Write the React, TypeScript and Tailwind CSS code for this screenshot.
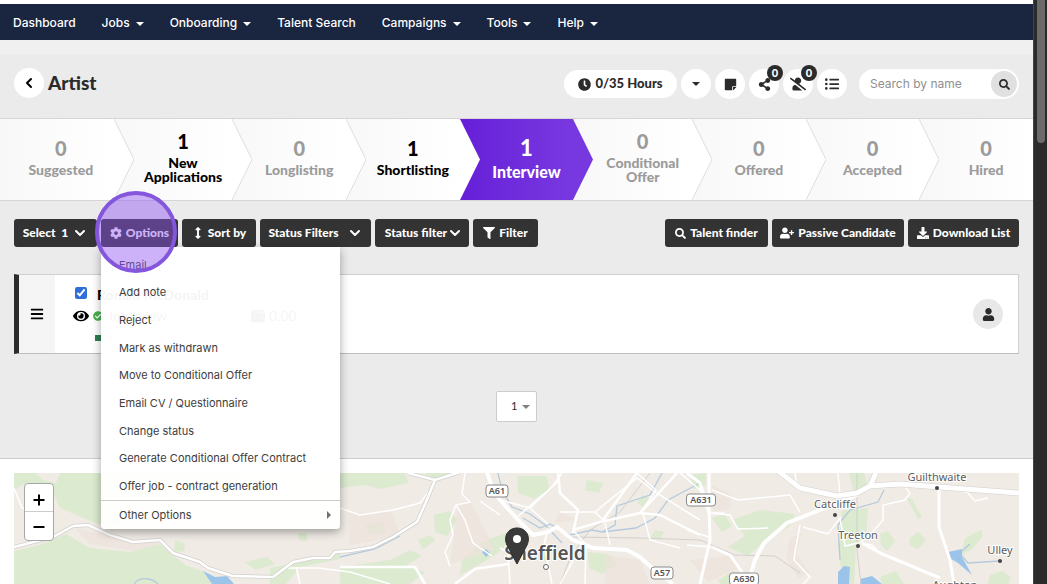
import type { ReactNode } from 'react';
import {
  FaArrowsAltV,
  FaBars,
  FaCheckCircle,
  FaClock,
  FaCog,
  FaDownload,
  FaEye,
  FaFilter,
  FaListUl,
  FaSearch,
  FaShareAlt,
  FaStickyNote,
  FaUser,
  FaUserPlus,
  FaUserSlash,
  FaWallet,
} from 'react-icons/fa';
import { FiChevronDown, FiChevronLeft } from 'react-icons/fi';

const navItems = [
  { label: 'Dashboard', menu: false },
  { label: 'Jobs', menu: true },
  { label: 'Onboarding', menu: true },
  { label: 'Talent Search', menu: false },
  { label: 'Campaigns', menu: true },
  { label: 'Tools', menu: true },
  { label: 'Help', menu: true },
];

const stages = [
  { name: 'Suggested', count: 0 },
  { name: 'New Applications', count: 1, wide: true },
  { name: 'Longlisting', count: 0 },
  { name: 'Shortlisting', count: 1 },
  { name: 'Interview', count: 1, active: true },
  { name: 'Conditional Offer', count: 0, wide: true },
  { name: 'Offered', count: 0 },
  { name: 'Accepted', count: 0 },
  { name: 'Hired', count: 0 },
];

const menuItems = [
  'Email',
  'Add note',
  'Reject',
  'Mark as withdrawn',
  'Move to Conditional Offer',
  'Email CV / Questionnaire',
  'Change status',
  'Generate Conditional Offer Contract',
  'Offer job - contract generation',
];

function Caret({ className = '' }: { className?: string }) {
  return (
    <svg viewBox="0 0 8 4" className={`h-1 w-2 ${className}`} fill="currentColor" aria-hidden="true">
      <path d="M0 0 H8 L4 4 Z" />
    </svg>
  );
}

function NavBar() {
  return (
    <nav className="mt-1 flex h-9 shrink-0 items-center gap-[26px] bg-[#1a2540] px-[13px] pt-0.5 font-['Inter','Liberation_Sans',sans-serif] text-xs font-medium text-white">
      {navItems.map((item) => (
        <a key={item.label} href="#" className="flex items-center gap-1.5 whitespace-nowrap">
          {item.label}
          {item.menu && <Caret className="mt-0.5" />}
        </a>
      ))}
    </nav>
  );
}

function RoundButton({ label, badge, children }: { label: string; badge?: number; children: ReactNode }) {
  return (
    <button
      aria-label={label}
      className="relative flex h-[30px] w-[30px] items-center justify-center rounded-full bg-white text-sm text-[#2b2b2b]"
    >
      {children}
      {badge !== undefined && (
        <span className="absolute -top-1 -right-1 flex h-4 w-4 items-center justify-center rounded-full bg-[#2b2b2b] text-[11px] font-black text-white">
          {badge}
        </span>
      )}
    </button>
  );
}

function PageHeader() {
  return (
    <header className="flex h-16 items-center justify-between px-3.5">
      <div className="flex items-center gap-1 pb-1.5">
        <button aria-label="Back" className="flex h-[30px] w-[30px] items-center justify-center rounded-full bg-white">
          <FiChevronLeft className="h-4 w-4 stroke-3" />
        </button>
        <h1 className="text-[19px] leading-6 font-black text-[#2b2b2b]">Artist</h1>
      </div>
      <div className="flex items-center gap-1 pb-1">
        <button className="flex h-7 w-[113px] items-center justify-center gap-1 rounded-full bg-white text-[13px] font-black text-[#2b2b2b]">
          <FaClock className="h-[13px] w-[13px]" />
          0/35 Hours
        </button>
        <RoundButton label="More hours">
          <Caret />
        </RoundButton>
        <RoundButton label="Notes">
          <FaStickyNote className="h-[13px] w-[13px]" />
        </RoundButton>
        <RoundButton label="Shared" badge={0}>
          <FaShareAlt className="h-[13px] w-[13px]" />
        </RoundButton>
        <RoundButton label="Hidden candidates" badge={0}>
          <FaUserSlash className="h-3.5 w-4" />
        </RoundButton>
        <RoundButton label="List view">
          <FaListUl className="h-3.5 w-3.5" />
        </RoundButton>
        <form className="ml-2 flex h-[30px] w-[160px] items-center rounded-full bg-white pr-0.5 pl-[11px]">
          <input
            type="text"
            aria-label="Search by name"
            placeholder="Search by name"
            className="min-w-0 flex-1 font-['Inter','Liberation_Sans',sans-serif] text-xs outline-none placeholder:text-[#8f8f8f]"
          />
          <button
            type="button"
            aria-label="Search"
            className="flex h-[26px] w-[26px] items-center justify-center rounded-full bg-[#e0e0e0] text-[#2b2b2b]"
          >
            <FaSearch className="h-[11px] w-[11px]" />
          </button>
        </form>
      </div>
    </header>
  );
}

function Pipeline() {
  return (
    <div className="flex h-[83px] border-y border-[#d6d6d6] bg-white">
      {stages.map((stage, i) => {
        const afterActive = i > 0 && stages[i - 1].active;
        let tone = 'bg-linear-to-r from-[#f8f8f8] to-white text-[#9b9b9b]';
        if (stage.active) tone = 'bg-linear-to-r from-[#661ed8] to-[#7838e0] text-white';
        else if (stage.count > 0) tone = 'bg-linear-to-r from-[#f8f8f8] to-white text-black';
        return (
          <a
            key={stage.name}
            href="#"
            className={`relative flex shrink grow flex-col items-center justify-center text-center font-black ${tone} ${
              stage.wide ? 'basis-[11.5%] pb-1.5' : 'basis-[11%]'
            } ${!stage.wide && !stage.active ? 'pb-1' : ''} ${i > 0 ? 'pl-5' : 'pl-2'}`}
          >
            {i > 0 && (
              <svg
                viewBox="0 0 20 81"
                preserveAspectRatio="none"
                className="absolute top-0 left-0 h-full w-5"
                aria-hidden="true"
              >
                <path d="M0 0 L20 40.5 L0 81 Z" fill={afterActive ? '#7838e0' : '#ffffff'} />
                {!afterActive && !stage.active && (
                  <path d="M0 0 L20 40.5 L0 81" fill="none" stroke="#dedede" strokeWidth="1" />
                )}
              </svg>
            )}
            <span className={stage.active ? 'text-[22px] leading-6' : 'text-xl leading-6'}>{stage.count}</span>
            <span
              className={
                stage.active ? 'text-base leading-6' : `text-sm ${stage.wide ? 'mt-[3px] leading-[14px]' : 'leading-5'}`
              }
            >
              {stage.name}
            </span>
          </a>
        );
      })}
    </div>
  );
}

function ToolButton({ width, children }: { width: string; children: ReactNode }) {
  return (
    <button
      className={`flex h-7 items-center justify-center gap-1 rounded-[3px] bg-[#333333] text-xs font-black whitespace-nowrap text-white ${width}`}
    >
      {children}
    </button>
  );
}

function OptionsMenu() {
  return (
    <div className="absolute top-full left-0 z-10 w-[239px] rounded-b-sm bg-white/[0.96] font-['Inter','Liberation_Sans',sans-serif] text-[11px] text-[#3d3d3d] shadow-[0_3px_10px_rgba(0,0,0,0.35)]">
      <ul className="flex h-[253px] flex-col pt-1">
        {menuItems.map((item) => (
          <li key={item} className="flex-1">
            <a href="#" className="flex h-full items-center px-[18px]">
              {item}
            </a>
          </li>
        ))}
      </ul>
      <a href="#" className="flex h-[29px] items-center justify-between border-t border-[#cccccc] pr-[7px] pl-[18px]">
        Other Options
        <Caret className="-rotate-90 text-[#707070]" />
      </a>
    </div>
  );
}

function Toolbar() {
  return (
    <div className="flex justify-between px-3.5 pt-[18px]">
      <div className="flex gap-1">
        <ToolButton width="w-[83px]">
          <span>Select&nbsp; 1</span>
          <FiChevronDown className="h-4 w-4 stroke-3" />
        </ToolButton>
        <div className="relative">
          <ToolButton width="w-[77px]">
            <FaCog className="h-3 w-3" />
            Options
          </ToolButton>
          <OptionsMenu />
          {/* click highlight */}
          <div className="pointer-events-none absolute -top-7 -left-1.5 z-20 h-[82px] w-[82px] rounded-full border-4 border-[#8456dc] bg-[#9155f5]/45" />
        </div>
        <ToolButton width="w-[74px]">
          <FaArrowsAltV className="h-3 w-3" />
          Sort by
        </ToolButton>
        <ToolButton width="w-[111px]">
          <span className="mr-1">Status Filters</span>
          <FiChevronDown className="h-4 w-4 stroke-3" />
        </ToolButton>
        <ToolButton width="w-[94px]">
          <span>Status filter</span>
          <FiChevronDown className="-mx-1 h-4 w-4 stroke-3" />
        </ToolButton>
        <ToolButton width="w-[65px]">
          <FaFilter className="h-3 w-3" />
          Filter
        </ToolButton>
      </div>
      <div className="flex gap-1">
        <ToolButton width="w-[103px]">
          <FaSearch className="h-[11px] w-[11px]" />
          Talent finder
        </ToolButton>
        <ToolButton width="w-[132px]">
          <FaUserPlus className="h-3 w-3.5" />
          Passive Candidate
        </ToolButton>
        <ToolButton width="w-[111px]">
          <FaDownload className="h-3 w-3" />
          Download List
        </ToolButton>
      </div>
    </div>
  );
}

function CandidateCard() {
  return (
    <div className="mx-3.5 mt-[27px] flex h-20 border-y border-r border-l-[5px] border-[#cfcfcf] border-b-[#bdbdbd] border-l-[#2b2b2b] bg-white">
      <div className="flex w-9 items-center justify-center bg-[#f5f5f5]">
        <FaBars className="h-3.5 w-3.5" />
      </div>
      <div className="flex-1 pt-2.5 pl-[18px]">
        <div className="flex h-5 items-center gap-2.5">
          <input
            type="checkbox"
            defaultChecked
            aria-label="Select Ronald McDonald"
            className="mb-1 ml-0.5 h-3 w-3 accent-[#2f6fdb]"
          />
          <h2 className="text-sm font-black text-black">Ronald McDonald</h2>
        </div>
        <div className="flex h-[22px] items-center text-sm">
          <FaEye className="h-4 w-4" />
          <FaCheckCircle className="ml-1 h-2.5 w-2.5 text-[#4caf50]" />
          <span className="ml-1.5 w-[142px]">Interview</span>
          <FaWallet className="mr-1 h-3.5 w-3.5" />
          0.00
        </div>
        <div className="mt-2 flex gap-1.5 pl-[22px]">
          <span className="h-1.5 w-1.5 bg-[#2e7d4f]" />
          <span className="h-1.5 w-1.5 bg-[#cccccc]" />
        </div>
      </div>
      <div className="flex items-center pr-[15px]">
        <button
          aria-label="Candidate profile"
          className="flex h-[30px] w-[30px] items-center justify-center rounded-full bg-[#e8e8e8] text-[#2b2b2b]"
        >
          <FaUser className="h-[13px] w-[13px]" />
        </button>
      </div>
    </div>
  );
}

function RoadSign({ x, y, label }: { x: number; y: number; label: string }) {
  const w = label.length * 7 + 1;
  return (
    <g>
      <rect x={x - w / 2} y={y - 6} width={w} height="12" rx="3" fill="#fff" stroke="#8a8a8a" />
      <text x={x} y={y + 3} fontSize="9" fontWeight="600" textAnchor="middle" fill="#555">
        {label}
      </text>
    </g>
  );
}

function Place({ x, y, label }: { x: number; y: number; label: string }) {
  return (
    <g>
      <circle cx={x} cy={y} r="2" fill="#444" />
      <text x={x} y={y - 7} fontSize="11" textAnchor="middle" fill="#5c5c5c" stroke="#fff" strokeWidth="2" paintOrder="stroke">
        {label}
      </text>
    </g>
  );
}

const mainRoad =
  'M14 547 L53 537 L73 526 L88 525 L110 535 L133 542 L160 540 L173 553 L200 562 L208 568 L233 576 L273 577 L293 562 L313 558 L330 558 L335 552 L350 551 L373 547 L393 537 L417 522 L426 502 L435 480 L460 472 M435 480 L408 473';
const motorway = 'M777 470 L800 488 L837 496 L857 493 L870 486 L900 484 L1019 493 M870 486 L876 473';

function AreaMap() {
  return (
    <div className="relative mx-3.5 mt-3.5 h-[111px] overflow-hidden bg-[#f0ebe5]">
      <svg
        viewBox="14 473 1005 111"
        preserveAspectRatio="xMidYMin slice"
        className="h-full w-full font-['Noto_Sans','Open_Sans',sans-serif]"
        role="img"
        aria-label="Map of Sheffield"
      >
        {/* woodland and parks */}
        <g fill="#dcead0">
          <path d="M14 473 H36 L43 480 L56 483 L60 473 H150 L240 473 L235 485 L180 500 L110 528 L88 520 L60 508 L53 492 L24 484 L14 490Z" />
          <path d="M14 551 L40 545 L66 534 L90 548 L130 552 L160 544 L185 565 L205 572 L212 584 H14Z" />
          <path d="M175 540 l10 3 -1 9 -10 -1z M298 533 l9 0 0 8 -8 -1z M245 562 l22 -5 8 7 -20 6z M270 568 L340 553 V559 L300 567 L286 584 H270Z" />
          <path d="M340 473 H405 L408 483 L380 489 L365 485 L340 488Z M425 473 h30 l-20 10z" />
          <path d="M434 515 l15 -4 8 8 -10 17 -12 -4z M418 540 l12 -5 5 6 -12 8z M365 525 l18 -4 2 12 -15 2z" />
          <path d="M340 567 L390 560 L410 550 L422 556 L405 566 L425 572 L410 584 H340Z" />
          <path d="M462 560 L480 543 L508 532 L512 538 L498 553 L475 567 L460 575Z" />
          <path d="M517 476 h30 l2 14 -15 9 -16 -6z M587 480 l16 3 -4 10 -14 -3z M588 552 l20 2 10 10 -16 10 -13 -6z" />
          <path d="M543 547 l7 6 -4 8 -8 -3z M655 530 l9 2 -4 8 -9 -3z M643 495 l10 5 -8 8 -8 -5z" />
          <path d="M732 520 L760 510 L795 514 L790 526 L766 540 L748 556 L728 547 L745 536Z" />
          <path d="M712 518 l12 -4 8 12 -10 6z M690 475 l16 -2 0 12 -12 4z M718 580 l15 -9 13 13 h-26z" />
          <path d="M849 473 l15 0 4 14 -14 6z M842 511 L868 508 L866 536 L856 545 L854 584 H843 L838 545Z" />
          <path d="M906 497 l6 2 10 18 -4 2z M880 534 l8 -3 7 10 -8 10 -6 -6z M910 538 l8 -6 8 8 -8 9 -9 -4z M965 538 l16 -8 2 6 -12 14 -10 6z" />
          <path d="M880 577 l16 -6 8 13 h-22z M990 575 l12 -4 9 6 -3 7 h-20z" />
        </g>
        {/* built-up areas */}
        <g fill="#ece2dc" opacity="0.7">
          <path d="M75 528 L130 540 L162 543 L137 551 L90 544Z M348 513 L392 512 L400 536 L350 545Z M458 504 L470 500 L495 550 L450 564Z" />
          <path d="M605 555 l35 5 10 24 h-45z M690 560 l40 -4 8 12 -30 14z M790 538 l12 -5 -6 20 14 20 -12 5 -12 -20z M560 510 l15 10 -20 3z M712 485 l20 10 -3 15 -16 0z" />
        </g>
        {/* water */}
        <g fill="#9cc4ea">
          <path d="M203 571 l12 6 12 -1 7 8 h-22z M838 572 l6 -6 6 1 -1 17 h-11z M860 579 l12 -3 10 8 h-22z M948 552 l14 -3 0 8 10 18 -14 -12 -10 -6z M482 552 l4 -3 4 4 -4 4z" />
        </g>
        <g fill="none" stroke="#b5cbdd" strokeWidth="1.3">
          <path d="M134 584 C140 576 152 578 158 584 M340 557 L375 549 L400 536 M498 473 L502 490 L512 507 L530 514 L545 525 L562 543" />
          <path d="M523 518 L540 528 L550 524 L570 535 L592 530 L602 532 L615 525 L617 506 L650 495 L662 473 M602 532 L636 528 L655 518 L668 500 L700 483" />
          <path d="M884 490 L878 502 L850 510 L838 525 L840 560 M962 551 L970 544 M962 556 L968 563 L1000 561" />
        </g>
        <g fill="none" stroke="#d3d0cd" strokeWidth="1">
          <path d="M571 537 L640 538 L700 540 L735 555 L775 556 L800 573 M560 584 L571 556 L590 530 L620 512 L650 473 M857 473 L857 550 L861 584" />
        </g>
        {/* minor roads */}
        <g fill="none" stroke="#ffffff" strokeWidth="1.5">
          <path d="M14 488 L22 508 L36 513 M340 508 L360 515 L393 510 L420 503 L434 485 M288 568 L318 568 L350 572 L390 584 M296 567 L300 584" />
          <path d="M465 473 L462 494 L470 502 L456 505 L450 520 L453 535 L445 552 L450 566 M456 505 L465 520 L473 543 L492 556 M480 501 L500 515" />
          <path d="M500 500 L530 508 L552 487 L562 473 M530 508 L548 524 M516 518 L560 480 M560 512 L595 512 L603 520 M595 512 L637 478 L655 492 L687 512 L700 520" />
          <path d="M573 530 L586 545 L585 584 M560 584 L580 548 M548 528 L544 545 L552 584 M510 584 L508 552 L500 548 M605 523 L610 545 M643 514 L650 540 L680 548 M637 473 L656 490 L640 513 M680 473 L700 490 L709 515" />
          <path d="M709 513 L730 515 L738 529 L768 528 M687 530 L709 537 M687 545 L712 547 M709 513 L724 513 M712 490 L738 500 L790 495 L800 512" />
          <path d="M800 525 L795 552 L794 560 L810 577 L803 584 M803 527 L828 534 L840 518 L845 546 L858 543 M838 473 L840 495 M795 473 L797 487" />
          <path d="M859 543 L870 535 L883 520 L883 505 L905 500 L910 493 L905 487 M862 543 L872 545 L883 556 M945 488 L967 492 L975 501 L988 498" />
        </g>
        {/* primary roads */}
        <g fill="none" strokeLinejoin="round">
          <path d={mainRoad} stroke="#d2d0ce" strokeWidth="4" />
          <path d={mainRoad} stroke="#fff" strokeWidth="2.5" />
          <path d="M487 472 L493 490 L500 500 L520 522 L533 535 L548 532 L557 527 L573 540 L593 548 L627 550 L640 557 L652 568 L673 584" stroke="#fff" strokeWidth="4" />
          <path d="M573 530 L600 522 L640 513 L655 497 L677 473 M637 473 L603 520 M573 533 L578 510 L560 493 L558 473 M340 567 L415 567 L425 584 M455 584 L475 569 L508 564 M640 513 L660 515 L700 535" stroke="#fff" strokeWidth="2.5" />
          <path d="M687 473 L700 483 L709 510 M709 473 L709 507 L710 540 L700 584 M712 547 L730 555 L742 572 M939 488 L939 527 L950 560 L954 584 M862 543 L880 553 L904 563 L940 578" stroke="#fff" strokeWidth="3" />
          <path d="M857 495 L820 510 L787 523 L764 543 L755 560 L748 584" stroke="#fff" strokeWidth="4" />
          <path d={motorway} stroke="#d2d0ce" strokeWidth="6" />
          <path d={motorway} stroke="#fff" strokeWidth="5" />
        </g>
        <RoadSign x={497} y={491} label="A61" />
        <RoadSign x={701} y={500} label="A631" />
        <RoadSign x={662} y={573} label="A57" />
        <RoadSign x={744} y={579} label="A630" />
        <Place x={937} y={488} label="Guilthwaite" />
        <Place x={835} y={515} label="Catcliffe" />
        <Place x={858} y={546} label="Treeton" />
        <Place x={1000} y={561} label="Ulley" />
        <Place x={955} y={596} label="Aughton" />
        <circle cx="546" cy="567" r="2.5" fill="#fff" stroke="#666" />
        <text x="545" y="560" fontSize="19" fontWeight="600" textAnchor="middle" fill="#555" stroke="#fff" strokeWidth="2" paintOrder="stroke">
          Sheffield
        </text>
        <path d="M517 564 L508 547 C502 537 508 528 517 528 C526 528 532 537 526 547Z" fill="#3a3a3a" stroke="#2b2b2b" />
        <circle cx="517" cy="539" r="4" fill="#fff" />
      </svg>
      <div className="absolute top-2.5 left-2.5 flex w-[30px] flex-col overflow-hidden rounded-sm border border-[#a8a8a8] bg-white text-black">
        <button aria-label="Zoom in" className="flex h-7 items-center justify-center border-b border-[#cccccc] pt-1">
          <svg viewBox="0 0 12 12" className="h-3 w-3" stroke="currentColor" strokeWidth="2">
            <path d="M6 0.5 V11.5 M0.5 6 H11.5" />
          </svg>
        </button>
        <button aria-label="Zoom out" className="flex h-7 items-center justify-center pt-0.5">
          <svg viewBox="0 0 12 12" className="h-3 w-3" stroke="currentColor" strokeWidth="2">
            <path d="M0.5 6 H11.5" />
          </svg>
        </button>
      </div>
    </div>
  );
}

export default function App() {
  return (
    <div className="flex h-screen overflow-hidden bg-white font-['Lato','Liberation_Sans',sans-serif]">
      <div className="flex min-w-0 flex-1 flex-col overflow-hidden">
        <NavBar />
        <main className="shrink-0">
          <div className="border-b border-[#cccccc] bg-[#ebebeb] pb-9">
            <div className="h-3.5 bg-[#f0f0f0]" />
            <PageHeader />
            <Pipeline />
            <Toolbar />
            <CandidateCard />
            <div className="flex justify-center pt-[37px]">
              <div className="relative">
                <select
                  aria-label="Page"
                  className="h-[31px] w-[41px] appearance-none rounded-xs border border-[#cccccc] bg-white pl-3.5 text-[11px] text-[#2b2b2b]"
                >
                  <option>1</option>
                </select>
                <Caret className="pointer-events-none absolute top-3.5 right-[7px] text-[#808080]" />
              </div>
            </div>
          </div>
          <AreaMap />
        </main>
      </div>
      {/* scrollbar */}
      <div className="flex w-3.5 shrink-0 justify-center border-l border-[#444444] bg-[#2b2b2b]">
        <div className="h-[143px] w-2 rounded-b-full bg-[#6b6b6b]" />
      </div>
    </div>
  );
}
